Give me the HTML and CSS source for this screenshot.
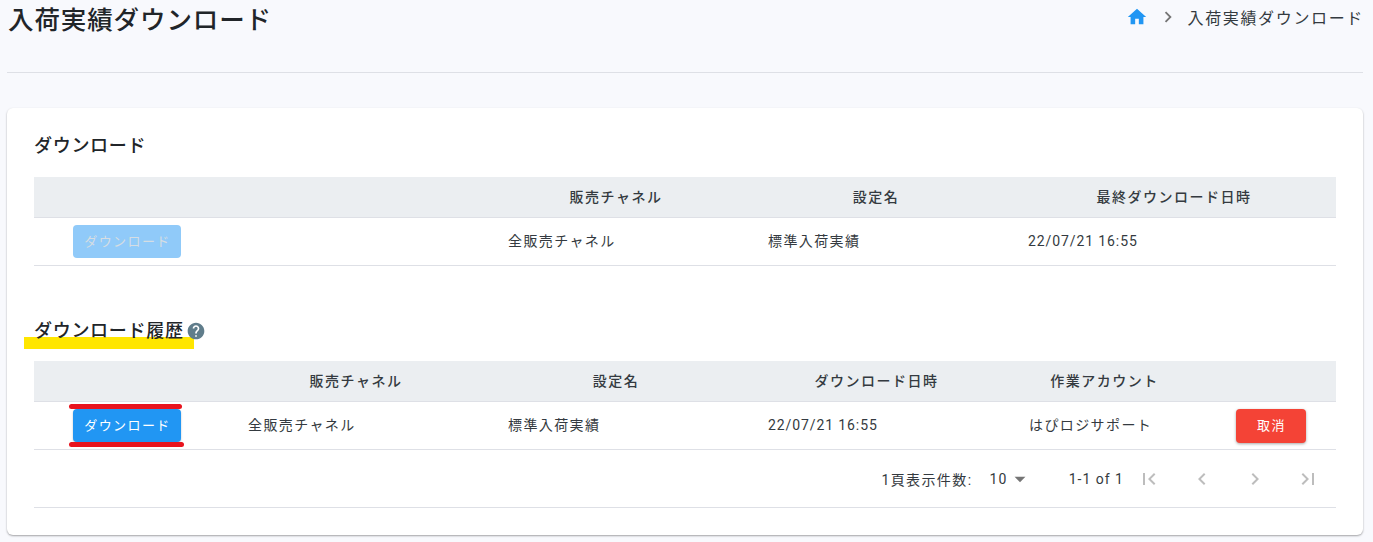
FILE: index.html
```html
<!DOCTYPE html>
<html lang="ja">
<head>
<meta charset="utf-8">
<title>入荷実績ダウンロード</title>
<link rel="stylesheet" href="styles.css">
</head>
<body>
<header class="page-header">
  <h1 class="page-title">入荷実績ダウンロード</h1>
  <nav class="breadcrumb">
    <svg class="home-icon" viewBox="0 0 24 24"><path d="M10 20v-6h4v6h5v-8h3L12 3 2 12h3v8z"/></svg>
    <svg class="crumb-sep" viewBox="0 0 24 24"><path d="M10 6L8.59 7.41 13.17 12l-4.58 4.59L10 18l6-6z"/></svg>
    <span class="crumb-text">入荷実績ダウンロード</span>
  </nav>
</header>
<main class="card">
  <section class="section-first">
    <h2 class="section-title">ダウンロード</h2>
    <div class="table table-latest">
      <div class="row head">
        <div></div>
        <div class="hcell">販売チャネル</div>
        <div class="hcell">設定名</div>
        <div class="hcell hcell-last">最終ダウンロード日時</div>
      </div>
      <div class="row body">
        <div class="btn-cell"><button class="btn btn-disabled" disabled>ダウンロード</button></div>
        <div class="cell">全販売チャネル</div>
        <div class="cell">標準入荷実績</div>
        <div class="cell cell-date">22/07/21 16:55</div>
      </div>
    </div>
  </section>
  <section class="section-history">
    <h2 class="section-title title-marked">
      <span class="marker"></span>
      <span class="title-text">ダウンロード履歴</span>
      <svg class="help-icon" viewBox="0 0 24 24"><path d="M12 2C6.48 2 2 6.48 2 12s4.48 10 10 10 10-4.48 10-10S17.52 2 12 2zm1 17h-2v-2h2v2zm2.07-7.75l-.9.92C13.45 12.9 13 13.5 13 15h-2v-.5c0-1.1.45-2.1 1.17-2.83l1.24-1.26c.37-.36.59-.86.59-1.41 0-1.1-.9-2-2-2s-2 .9-2 2H8c0-2.21 1.79-4 4-4s4 1.79 4 4c0 .88-.36 1.68-.93 2.25z"/></svg>
    </h2>
    <div class="table table-history">
      <div class="row head">
        <div></div>
        <div class="hcell">販売チャネル</div>
        <div class="hcell">設定名</div>
        <div class="hcell">ダウンロード日時</div>
        <div class="hcell hcell-account">作業アカウント</div>
        <div></div>
      </div>
      <div class="row body">
        <div class="btn-cell">
          <span class="btn-wrap">
            <span class="redline redline-top"></span>
            <button class="btn btn-primary">ダウンロード</button>
            <span class="redline redline-bottom"></span>
          </span>
        </div>
        <div class="cell">全販売チャネル</div>
        <div class="cell">標準入荷実績</div>
        <div class="cell cell-date">22/07/21 16:55</div>
        <div class="cell">はぴロジサポート</div>
        <div class="cancel-cell"><button class="btn btn-danger">取消</button></div>
      </div>
    </div>
    <div class="pagination">
      <span class="per-page-label">1頁表示件数:</span>
      <span class="per-page-value">10</span>
      <svg class="caret" viewBox="0 0 24 24"><path d="M7 10l5 5 5-5z"/></svg>
      <span class="range">1-1 of 1</span>
      <div class="pager">
        <svg class="pager-icon" viewBox="0 0 24 24"><path d="M18.41 16.59L13.82 12l4.59-4.59L17 6l-6 6 6 6zM6 6h2v12H6z"/></svg>
        <svg class="pager-icon" viewBox="0 0 24 24"><path d="M15.41 7.41L14 6l-6 6 6 6 1.41-1.41L10.83 12z"/></svg>
        <svg class="pager-icon" viewBox="0 0 24 24"><path d="M10 6L8.59 7.41 13.17 12l-4.58 4.59L10 18l6-6z"/></svg>
        <svg class="pager-icon" viewBox="0 0 24 24"><path d="M5.59 7.41L10.18 12l-4.59 4.59L7 18l6-6-6-6zM16 6h2v12h-2z"/></svg>
      </div>
    </div>
  </section>
</main>
</body>
</html>
```
FILE: styles.css
```css
* { box-sizing: border-box; }
html, body { height: 100%; }
body {
  margin: 0;
  padding: 0 10px 0 7px;
  background: #f8f9fd;
  color: #212529;
  font-family: Roboto, "Noto Sans CJK JP", sans-serif;
  font-size: 14px;
  letter-spacing: 1.4px;
  overflow: hidden;
}
.page-header {
  height: 73px;
  border-bottom: 1px solid #dee0e6;
  display: flex;
  justify-content: space-between;
  align-items: flex-start;
}
.page-title {
  margin: 0;
  padding-left: 1px;
  font-size: 25.5px;
  font-weight: 500;
  line-height: 40px;
  letter-spacing: .9px;
}
.breadcrumb {
  display: flex;
  align-items: center;
  height: 34px;
  color: #343a40;
}
.home-icon { width: 22px; height: 22px; fill: #2196f3; margin-right: 9px; }
.crumb-sep { width: 22px; height: 22px; fill: #757575; margin-right: 8px; }
.crumb-text { font-size: 16px; letter-spacing: 1.65px; margin-right: -1px; }
.card {
  margin-top: 35px;
  height: 427px;
  background: #fff;
  border-radius: 6px;
  padding: 0 27px;
  box-shadow: 0 1px 2px rgba(0, 0, 0, .35);
}
.section-first { padding-top: 23px; }
.section-title {
  margin: 0;
  height: 29px;
  font-size: 18px;
  font-weight: 500;
  line-height: 27px;
  letter-spacing: .7px;
  display: flex;
  align-items: center;
}
.section-first .table { margin-top: 17px; }
.section-history { padding-top: 50px; }
.title-marked { position: relative; }
.marker {
  position: absolute;
  left: -10px;
  top: 21px;
  width: 170px;
  height: 12px;
  background: #ffe600;
}
.title-text { position: relative; }
.help-icon { position: relative; width: 20px; height: 20px; fill: #607d8b; margin-left: 2px; }
.section-history .table { margin-top: 16px; }
.row { display: grid; align-items: center; }
.table-latest .row { grid-template-columns: 458px 260px 260px 1fr; }
.table-history .row { grid-template-columns: 198px 260px 260px 261px 203px 1fr; }
.head {
  height: 41px;
  background: #ebeef1;
  border-bottom: 1px solid #dee0e6;
}
.body {
  height: 48px;
  border-bottom: 1px solid #dee0e6;
}
.hcell {
  padding-right: 12px;
  padding-bottom: 3px;
  text-align: center;
  font-weight: 500;
  letter-spacing: 1.5px;
  color: #343a40;
}
.hcell-last { padding-right: 0; }
.hcell-account { padding-right: 20px; }
.cell { padding-left: 16px; padding-bottom: 4px; color: #343a40; }
.cell-date { letter-spacing: .9px; padding-bottom: 2px; }
.btn-cell { padding-left: 39px; display: flex; }
.cancel-cell { padding-left: 20px; display: flex; }
.btn {
  height: 33px;
  border: 0;
  border-radius: 4px;
  font-family: inherit;
  font-size: 13px;
  font-weight: 400;
  letter-spacing: 1.4px;
  padding: 0 0 2px 1px;
  width: 108px;
}
.btn-disabled { background: #90caf9; color: #d5dde3; }
.btn-primary { background: #2196f3; color: #fff; box-shadow: 0 1px 2px rgba(0, 0, 0, .25); }
.btn-danger {
  width: 70px;
  height: 34px;
  background: #f44336;
  color: #fff;
  box-shadow: 0 1px 3px rgba(0, 0, 0, .35);
}
.btn-wrap { position: relative; display: flex; }
.redline {
  position: absolute;
  left: -4px;
  height: 5px;
  background: #e8141e;
  border-radius: 2.5px;
}
.redline-top { top: -5px; width: 113px; }
.redline-bottom { top: 33px; width: 115px; }
.pagination {
  height: 58px;
  border-bottom: 1px solid #dee0e6;
  display: flex;
  align-items: center;
  justify-content: flex-end;
  color: #343a40;
}
.per-page-value { margin-left: 17px; letter-spacing: 1.26px; }
.caret { width: 26px; height: 26px; fill: #757575; margin-left: -1px; }
.range { margin-left: 36px; letter-spacing: 1px; }
.pager { display: flex; margin-left: 13px; margin-right: 16px; gap: 29px; }
.pager-icon { width: 24px; height: 24px; fill: #bdbdbd; }
```
